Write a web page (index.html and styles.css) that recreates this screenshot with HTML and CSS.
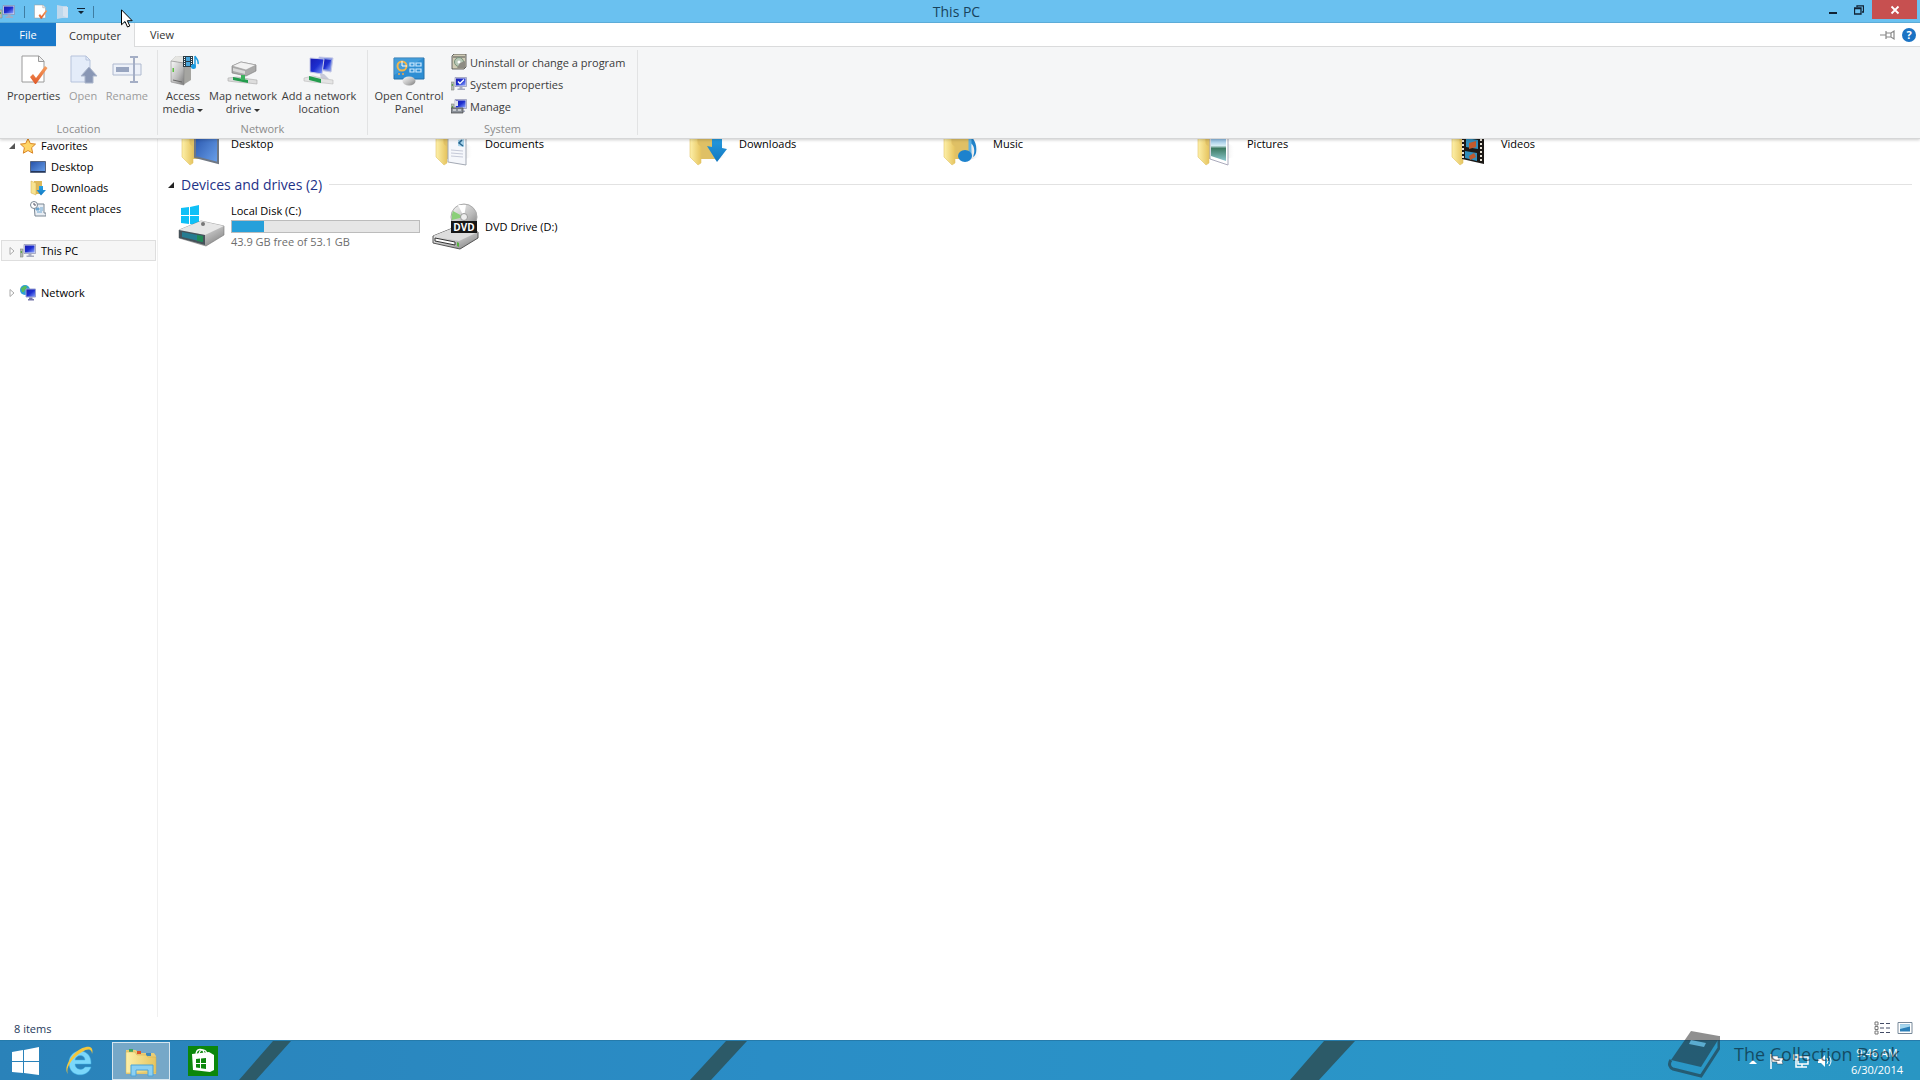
FILE: index.html
```html
<!DOCTYPE html>
<html lang="en">
<head>
    <meta charset="UTF-8">
    <meta name="viewport" content="width=device-width, initial-scale=1.0">
    <title>This PC</title>
    <link rel="stylesheet" href="styles.css">
</head>
<body>
    <!-- Shared gradients and icons -->
    <svg class="defs" aria-hidden="true">
        <defs>
            <linearGradient id="gold" x1="0" x2="1"><stop offset="0" stop-color="#fdf0a9"/><stop offset="1" stop-color="#e6c45e"/></linearGradient>
            <linearGradient id="steel" x1="0" y1="0" x2="1" y2="1"><stop offset="0" stop-color="#fafafa"/><stop offset=".6" stop-color="#b9b9b9"/><stop offset="1" stop-color="#777"/></linearGradient>
            <linearGradient id="screen" x1="0" y1="0" x2="1" y2="1"><stop offset="0" stop-color="#1a1ab0"/><stop offset=".5" stop-color="#1d2fd0"/><stop offset="1" stop-color="#8fa8ff"/></linearGradient>
            <linearGradient id="blue" x1="0" y1="0" x2="1" y2="1"><stop offset="0" stop-color="#2450a8"/><stop offset="1" stop-color="#6ba2ec"/></linearGradient>
            <linearGradient id="arrow" x1="0" y1="0" x2="0" y2="1"><stop offset="0" stop-color="#2ba3e6"/><stop offset="1" stop-color="#1277c0"/></linearGradient>
            <linearGradient id="shade"><stop offset="0" stop-color="#bbb"/><stop offset="1" stop-color="#fff" stop-opacity="0"/></linearGradient>
            <linearGradient id="photo" x1="0" y1="0" x2="0" y2="1"><stop offset="0" stop-color="#4b8fd0"/><stop offset=".45" stop-color="#d5ecf5"/><stop offset=".55" stop-color="#3d7a62"/><stop offset="1" stop-color="#8cc8cf"/></linearGradient>
            <linearGradient id="orange" x1="0" y1="0" x2="0" y2="1"><stop offset="0" stop-color="#f6a05f"/><stop offset="1" stop-color="#e0592a"/></linearGradient>
        </defs>
        <symbol id="pc" viewBox="0 0 16 16">
            <path d="M0 6h3v8H0z" fill="#b4b9b4" stroke="#858c85" stroke-width=".6"/><path d="M.8 8h1.200v2H.8z" fill="#5fa84a"/>
            <path d="M4 1.500h11.500v9H4z" fill="#d5d9ea" stroke="#7d83a8" stroke-width=".6"/><path d="M5 2.500h9.500v7H5z" fill="url(#screen)"/>
            <path d="M8.500 10.500h3v2h2.500v1.500H6.500v-1.500h2z" fill="#a6abc0"/>
        </symbol>
        <symbol id="sheet" viewBox="0 0 28 32">
            <path d="M1 2h17l5 5v21H1z" fill="#fff" stroke="#9a9a9a"/><path d="M17.500 2v5.500H23" fill="#eee" stroke="#9a9a9a"/>
            <path d="M9 23l3-3 3 4 9-12 2.500 2L15 30h-1z" fill="url(#orange)"/>
        </symbol>
        <symbol id="folder" viewBox="0 0 48 48">
            <path d="M30 41l11-3 1-10-8-4z" fill="url(#shade)" opacity=".6"/>
            <path d="M9 6h21v34H14z" fill="#dfc065"/><path d="M5 8l7 3 1 14 3 3v16l-3 2-8-8z" fill="url(#gold)" stroke="#e3c568" stroke-width=".6"/>
        </symbol>
    </svg>

    <header class="window-top">
        <div class="titlebar">
            <div class="quick">
                <svg class="i16" viewBox="1 0 16 16"><use href="#pc" width="16" height="16"/></svg>
                <span class="bar"></span>
                <button type="button" aria-label="Properties"><svg class="i16"><use href="#sheet"/></svg></button>
                <button type="button" aria-label="New folder"><svg class="i16" viewBox="0 0 16 16"><path d="M2 1l5 1v12l-5 1zM7 2h5v12H7z" fill="#bfd8ec"/><path d="M8 3h5v11l-5-2z" fill="#d6e3f0"/></svg></button>
                <button type="button" class="caret" aria-label="Customize toolbar"><svg viewBox="0 0 8 7"><path d="M0 0h8v1H0zM1 3h6L4 6z" fill="#123"/></svg></button>
                <span class="bar"></span>
            </div>
            <h1>This PC</h1>
            <div class="window-buttons">
                <button type="button" aria-label="Minimize"><svg viewBox="0 0 10 10"><path d="M1 7h8v2H1z" fill="#123"/></svg></button>
                <button type="button" aria-label="Restore"><svg viewBox="0 0 10 10"><path d="M.5 3h6.500v6H.500zM0 3.500h7M3 2V.8h6.500V7H8" fill="none" stroke="#123" stroke-width="1.300"/></svg></button>
                <button type="button" class="close" aria-label="Close"><svg viewBox="0 0 10 10"><path d="M1.500 1.500l7 7m0-7l-7 7" stroke="#fff" stroke-width="1.800"/></svg></button>
            </div>
        </div>

        <nav class="tabs">
            <button type="button" class="file">File</button>
            <button type="button" class="active">Computer</button>
            <button type="button">View</button>
            <div class="tabs-right">
                <svg class="i16" viewBox="0 0 16 16"><path d="M0 8h6M6 4v8M6 6h5l3-2v8l-3-2H6M11 6v4" fill="none" stroke="#888" stroke-width="1.200"/></svg>
                <button type="button" class="help" aria-label="Help">?</button>
            </div>
        </nav>

        <div class="ribbon">
            <section class="group location">
                <div class="tools">
                    <button type="button" class="tool"><svg class="i32" viewBox="-3 0 32 32"><use href="#sheet" width="28" height="32"/></svg>Properties</button>
                    <button type="button" class="tool" disabled><svg class="i32" viewBox="0 0 32 32"><path d="M4 2h15l4 4v22H4z" fill="#e4ecf9" stroke="#b6c3dc"/><path d="M19 2v4h4" fill="none" stroke="#b6c3dc"/><path d="M22 13l8 9h-4v7h-8v-7h-4z" fill="#8997b5" stroke="#aab5cb"/></svg>Open</button>
                    <button type="button" class="tool" disabled><svg class="i32" viewBox="0 0 32 32"><path d="M2 10h28v11H2z" fill="#edf1f9" stroke="#aeb9cf"/><path d="M5 13h13v5H5z" fill="#98a5c0"/><path d="M19 3h8M19 28h8M23 4v23" stroke="#a4aec5" stroke-width="2" fill="none"/></svg>Rename</button>
                </div>
                <h2>Location</h2>
            </section>
            <section class="group network">
                <div class="tools">
                    <button type="button" class="tool w44"><svg class="i32" viewBox="0 0 32 32"><path d="M4 7l5-5 15 1v23l-8 5z" fill="#a5a5a1"/><path d="M4 7l5-5 15 1-7 6z" fill="#e6e6e3"/><path d="M4 7l13 2v22L4 28z" fill="url(#steel)" stroke="#888" stroke-width=".6"/><path d="M6 26l9 2" stroke="#666"/><path d="M5.500 14H7v4H5.500z" fill="#5cc040"/><path d="M16 2h10v11H16z" fill="#293c46"/><path d="M19 3h4v4h-4zM19 8h4v4h-4z" fill="#49a5da"/><path d="M17.500 3v10M24.500 3v10" stroke="#fff" stroke-dasharray="1 1"/><path d="M28 2v10M28 2c1 3 4 3 3 8" fill="none" stroke="#1b9be0" stroke-width="1.500"/><circle cx="26.500" cy="12.500" r="2.500" fill="#1b9be0"/></svg>Access<br>media <i></i></button>
                    <button type="button" class="tool w76"><svg class="i32" viewBox="0 0 32 32"><path d="M5 12l9-4 15 3v6l-10 5L5 19z" fill="#aaa" stroke="#777" stroke-width=".6"/><path d="M5 12l9-4 15 3-10 5z" fill="#f2f2f2" stroke="#999" stroke-width=".6"/><path d="M6 14l12 3v3L6 17z" fill="#d9d9d9"/><path d="M1 24l9-1 12 2 8 1v4l-9-1-12-1-8-1z" fill="#ddd" stroke="#aaa" stroke-width=".6"/><path d="M6 23l15 3v3L6 26z" fill="#239c4d"/><path d="M14 21h4v5h-4z" fill="#3bb25d"/></svg>Map network<br>drive <i></i></button>
                    <button type="button" class="tool w76"><svg class="i32" viewBox="0 0 32 32"><path d="M16 3l14 1-2 14-12-2z" fill="#8294df" stroke="#c5c9e8"/><path d="M20 5l8 1-1 10-7-1z" fill="url(#screen)"/><path d="M7 4l14 1-2 15-12-2z" fill="url(#screen)" stroke="#c5c9e8"/><path d="M17 20h4l5 5h-8z" fill="#c8cad8"/><path d="M1 24l9-2 12 3 8 1v4l-9-1-12-1-8-1z" fill="#e4e4e4" stroke="#bbb" stroke-width=".6"/><path d="M6 22l12 3v4L6 26z" fill="#239c4d"/></svg>Add a network<br>location</button>
                </div>
                <h2>Network</h2>
            </section>
            <section class="group system">
                <div class="tools">
                    <button type="button" class="tool w76"><svg class="i32" viewBox="0 0 32 32"><path d="M1 4h30v21H1z" fill="#2e8ed3" stroke="#2470aa"/><path d="M1 4h30L1 21z" fill="#62b4e8" opacity=".4"/><circle cx="9" cy="12" r="4.500" fill="none" stroke="#f3b64a" stroke-width="2"/><path d="M9 7v5h5" stroke="#fff" fill="none"/><path d="M17 9h4v3h-4zM23 9h5v3h-5zM17 15h4v3h-4zM23 15h5v3h-5z" stroke="#cdeaff" stroke-width="1.200" fill="none"/><circle cx="6" cy="20" r="1" fill="#f3a64a"/><circle cx="10" cy="20" r="1" fill="#f3a64a"/><path d="M14 23h5l1 4h-7z" fill="#aaa"/><ellipse cx="16" cy="27" rx="6.500" ry="4.500" fill="url(#steel)"/></svg>Open Control<br>Panel</button>
                    <div class="small-tools">
                        <button type="button"><svg class="i16" viewBox="0 0 16 16"><path d="M1 2l2-2h12v13l-2 2H1z" fill="#d0ccb6" stroke="#444" stroke-width=".8"/><path d="M2 3h12" stroke="#555"/><circle cx="8" cy="8" r="4.500" fill="#b8c8b8" stroke="#77907a"/><circle cx="8" cy="8" r="1.500" fill="#fff"/><path d="M9 9l5-2v7H6z" fill="#8d8b83"/></svg>Uninstall or change a program</button>
                        <button type="button"><svg class="i16" viewBox="0 0 16 16"><use href="#pc"/><path d="M7 5.500l2 2 4-4" fill="none" stroke="#fff" stroke-width="1.400"/></svg>System properties</button>
                        <button type="button"><svg class="i16" viewBox="0 0 16 16"><use href="#pc"/><path d="M0 10h12v5H0z" fill="#8b9199" stroke="#444" stroke-width=".7"/><path d="M4 3h3v5H4z" fill="#dce1ea"/><path d="M2 12h3m2 0h3" stroke="#fff"/></svg>Manage</button>
                    </div>
                </div>
                <h2>System</h2>
            </section>
        </div>
    </header>

    <main class="explorer">
        <aside class="tree">
            <ul>
                <li><a href="#"><svg class="twist" viewBox="0 0 6 6"><path d="M6 0v6H0z" fill="#555"/></svg><svg class="i16" viewBox="0 0 16 16"><path d="M8 .5l2.300 5 5.200.6-3.900 3.600 1.100 5.500L8 12.500l-4.700 2.700 1.100-5.500L.5 6.100l5.200-.6z" fill="#ffd567" stroke="#d98524"/></svg>Favorites</a></li>
                <li class="child"><a href="#"><svg class="i16" viewBox="0 0 16 16"><path d="M.5 2.500h15v11H.5z" fill="url(#blue)" stroke="#566580"/><path d="M1 12.500h14" stroke="#24365c"/></svg>Desktop</a></li>
                <li class="child"><a href="#"><svg class="i16" viewBox="0 0 16 16"><path d="M4 1h8v13H4z" fill="#ddb95b"/><path d="M1 1l5 2v12l-5-2z" fill="#f8e391" stroke="#d4ad4c" stroke-width=".5"/><path d="M9 6h4v4h3l-5 5.500L6.500 10H9z" fill="url(#arrow)"/></svg>Downloads</a></li>
                <li class="child"><a href="#"><svg class="i16" viewBox="0 0 16 16"><path d="M4 3h10v9h2v3H5z" fill="#e8edf3" stroke="#7b8793"/><path d="M6 7h3v2H6zM10 7h3M10 9h3M7 11h5" fill="#6ca5d0" stroke="#6ca5d0"/><circle cx="4" cy="4" r="3.500" fill="#fff" stroke="#7b8793"/><path d="M4 2v2h2" fill="none" stroke="#556"/></svg>Recent places</a></li>
            </ul>
            <ul>
                <li class="current"><a href="#"><svg class="twist" viewBox="0 0 6 8"><path d="M1 .5L5 4 1 7.500z" fill="#fff" stroke="#aaa"/></svg><svg class="i16"><use href="#pc"/></svg>This PC</a></li>
            </ul>
            <ul>
                <li><a href="#"><svg class="twist" viewBox="0 0 6 8"><path d="M1 .5L5 4 1 7.500z" fill="#fff" stroke="#aaa"/></svg><svg class="i16" viewBox="0 0 16 16"><circle cx="5" cy="5" r="5" fill="#2d9ed8"/><path d="M1 3c2 0 3-3 5-2s0 3-1 4-1 3-3 2z" fill="#57bb5c"/><path d="M6 4h9.500v8H6z" fill="url(#screen)" stroke="#9aa2ce"/><path d="M9 12.500h3.500V14H14v1.500H8V14h1z" fill="#77a"/></svg>Network</a></li>
            </ul>
        </aside>

        <section class="files">
            <div class="tiles folders">
                <a href="#" class="tile"><svg class="i48"><use href="#folder"/><path d="M18 12l23 4v28l-23-6z" fill="url(#blue)" stroke="#6f7783" stroke-width="2"/></svg><span>Desktop</span></a>
                <a href="#" class="tile"><svg class="i48"><use href="#folder"/><path d="M17 12l18 4v30l-18-3z" fill="#f5f7fb" stroke="#a3a9b4"/><path d="M27 21l6-1v8l-6-1z" fill="#a9d3ea"/><path d="M31 21l-3 3 4 3" stroke="#27658f" stroke-width="1.500" fill="none"/><path d="M20 31l12 1M20 34l12 1M20 37l12 1" stroke="#c6cad8"/></svg><span>Documents</span></a>
                <a href="#" class="tile"><svg class="i48"><use href="#folder"/><path d="M27 14l10 1v14l5 1-10 13-10-16 5 1z" fill="url(#arrow)"/></svg><span>Downloads</span></a>
                <a href="#" class="tile"><svg class="i48"><use href="#folder"/><path d="M31 12c1 8 8 10 6 22-1 3-3 4-3 4 3-8 0-13-3-14" fill="#2183ca"/><path d="M31 12v25" stroke="#5cb1e5" stroke-width="3"/><ellipse cx="26" cy="37" rx="7" ry="6" fill="#1d82cd"/></svg><span>Music</span></a>
                <a href="#" class="tile"><svg class="i48"><use href="#folder"/><path d="M17 12l18 4v30l-18-6z" fill="#fff" stroke="#aab"/><path d="M18 14l15 4v24l-15-5z" fill="url(#photo)"/></svg><span>Pictures</span></a>
                <a href="#" class="tile"><svg class="i48"><use href="#folder"/><path d="M15 12l22 3v30l-22-5z" fill="#1c1916"/><path d="M19 19l12 2v9l-12-2zM18 32l12 2v8l-12-3z" fill="#328ebb"/><path d="M22 24l7-2v6l-7 2zM22 37l5-3 2 4-6 3z" fill="#c05b2e"/><path d="M34 16v27M16 13v26" stroke="#e8e2d6" stroke-width="2" stroke-dasharray="2 2"/></svg><span>Videos</span></a>
            </div>

            <h2 class="heading"><svg class="twist" viewBox="0 0 6 6"><path d="M6 0v6H0z" fill="#222"/></svg>Devices and drives (2)</h2>

            <div class="tiles">
                <a href="#" class="tile">
                    <svg class="i48" viewBox="0 0 48 48"><path d="M4 6l8-1v8H4zM13 5l9-2v10h-9zM4 14h8v8l-8-1zM13 14h9v10l-9-2z" fill="#0fc0f7"/><path d="M2 28l22-9 23 5v9L29 44 2 36z" fill="url(#steel)" stroke="#777" stroke-width=".6"/><path d="M2 28l22-9 23 5-19 9z" fill="#e7e7e7"/><path d="M2 28l26 5v10L2 36z" fill="#46525a"/><path d="M5 30l21 4v6L5 35z" fill="#267b91"/><path d="M20 33l6 1v6l-6-1z" fill="#218a56"/><circle cx="26" cy="22" r="2" fill="#777"/></svg>
                    <span class="drive">Local Disk (C:)<span class="usage"><span style="width: 17.3%"></span></span><small>43.9 GB free of 53.1 GB</small></span>
                </a>
                <a href="#" class="tile">
                    <svg class="i48" viewBox="0 0 48 48"><circle cx="33" cy="15" r="13" fill="url(#steel)" stroke="#aaa"/><path d="M33 15L22 9a13 13 0 0 0-1 9z" fill="#8bcf79"/><path d="M33 15L27 3h8z" fill="#fff"/><circle cx="33" cy="15" r="3.500" fill="#eee" stroke="#999"/><path d="M2 34l20-8 25 4v6L29 47 2 41z" fill="url(#steel)" stroke="#555"/><path d="M2 34l20-8 25 4-19 9z" fill="#ddd"/><path d="M4 36l20 4v3L4 39z" fill="#fff" stroke="#333"/><path d="M26 40l2 1v4l-2-1z" fill="#55b33f"/><path d="M20 19h26v12H20z" fill="#171717"/><text x="33" y="29" text-anchor="middle" class="dvd">DVD</text></svg>
                    <span>DVD Drive (D:)</span>
                </a>
            </div>
        </section>
    </main>

    <footer class="status">
        <span>8 items</span>
        <div class="views">
            <button type="button" aria-label="Details view"><svg class="i16" viewBox="0 0 16 16"><path d="M1 1h3v3H1zM1 5.500h3v3H1zM1 10h3v3H1z" fill="#fff" stroke="#777"/><path d="M6 2.500h4m2 0h4M6 7h4m2 0h4M6 11.500h4m2 0h4" stroke="#444c66"/></svg></button>
            <button type="button" aria-label="Large icons view"><svg class="i16" viewBox="0 0 16 16"><path d="M1 1.500h14v11H1z" fill="#fff" stroke="#789"/><path d="M3 3.500h10v7H3z" fill="#2a7fb8"/><path d="M3 3.500h10v2L3 8z" fill="#a5d6ee"/></svg></button>
        </div>
    </footer>

    <nav class="taskbar">
        <svg class="wallpaper" viewBox="0 0 1920 40" preserveAspectRatio="none"><path d="M273 0h18l-35 40h-17zM726 0h21l-36 40h-21zM1324 0h31l-36 40h-29z" fill="#2c5a68"/></svg>
        <button type="button" class="start" aria-label="Start"><svg class="i32" viewBox="0 0 32 32"><path d="M3 7l11-2v11H3zM15 5l15-3v14H15zM3 17h11v11L3 27zM15 17h15v13l-15-2z" fill="#fff"/></svg></button>
        <button type="button" aria-label="Internet Explorer"><svg class="i32" viewBox="0 0 32 32"><path d="M28 19H12c0 6 8 7 10 3h6c-3 11-22 11-22-4C6 2 29 2 28 19zM12 15h10c0-6-9-6-10 0z" fill="#7bd7fa" stroke="#42b3e6" stroke-width=".5"/><path d="M5 29c-6-6 6-25 18-27 7-1 7 4 6 7 0-5-4-6-10-2C9 12 2 24 5 29z" fill="#f4c73c"/></svg></button>
        <button type="button" class="running" aria-label="File Explorer"><svg class="i32" viewBox="0 0 32 32"><path d="M1 5h10l2 3h16l2 3v18H1z" fill="#e9cd76"/><path d="M4 4h4v3H4z" fill="#3aa660"/><path d="M12 6h4v3h-4z" fill="#d9542c"/><path d="M21 8h5v3h-5z" fill="#3d89bd"/><path d="M1 7h9l2 3h9l2 2h8v16H1z" fill="url(#gold)" stroke="#d1ad51" stroke-width=".5"/><path d="M6 20h22v11h-5v-6H11v6H6z" fill="#8bd0f3" stroke="#4ba3d8"/></svg></button>
        <button type="button" aria-label="Store"><svg class="i32" viewBox="0 0 32 32"><path d="M1 1h30v30H1z" fill="#0c870c"/><path d="M5 9l17-2 5 3v15l-4 2-17-2z" fill="#fff"/><path d="M9 10c0-7 7-7 8-2M12 9c1-6 7-5 8 0" fill="none" stroke="#fff" stroke-width="1.300"/><path d="M9 14l4-.5V18H9zM14 13.500l5-.5v5h-5zM9 19h4v4l-4-.5zM14 19h5v5l-5-.8z" fill="#0c870c"/></svg></button>
        <div class="tray">
            <button type="button" aria-label="Show hidden icons"><svg class="i16" viewBox="0 0 16 16"><path d="M4 11l4-4 4 4z" fill="#fff"/></svg></button>
            <svg class="i16" viewBox="0 0 16 16"><path d="M2 1v15" stroke="#fff" stroke-width="1.500"/><path d="M3 3h6v2h6l-2 3 1 3H8V9H3z" fill="#fff" stroke="#345" stroke-width=".5"/></svg>
            <svg class="i16" viewBox="0 0 16 16"><path d="M5 4h10v7H5zM9 11v3m-3 0h8M1 2h4v4H1zM3 6v8h3" fill="none" stroke="#fff" stroke-width="1.500"/></svg>
            <svg class="i16" viewBox="0 0 16 16"><path d="M1 6h3l4-4v12l-4-4H1z" fill="#fff"/><path d="M10 5q2 3 0 6M12 3q4 5 0 10" fill="none" stroke="#fff"/></svg>
            <time>9:46 AM<br>6/30/2014</time>
        </div>
    </nav>

    <div class="watermark">
        <svg viewBox="0 0 52 48"><path d="M23 1l28 5-1 4L33 37 3 30z" fill="#222"/><path d="M3 30c-3 4-1 8 2 9l28 7 18-28V6" fill="none" stroke="#222" stroke-width="3"/><path d="M23 10l15 3-2 4-15-3z" fill="#8cc2da"/></svg>
        <span>The Collection Book</span>
    </div>
    <svg class="cursor" viewBox="0 0 12 19"><path d="M.5.8v15l3.500-3.300 2.500 5.500 2.300-1-2.400-5.300h4.800z" fill="#fff" stroke="#000"/></svg>
</body>
</html>
```
FILE: styles.css
```css
* {
    box-sizing: border-box;
}
body {
    display: flex;
    flex-direction: column;
    height: 100vh;
    margin: 0;
    overflow: hidden;
    background-color: #fff;
    color: #000;
    font-family: "Open Sans", "Noto Sans", sans-serif;
    font-size: 11px;
    line-height: 13px;
}
button {
    padding: 0;
    border: 0;
    background: none;
    color: inherit;
    font: inherit;
}
a {
    color: inherit;
    text-decoration: none;
}
h1, h2, ul {
    margin: 0;
    padding: 0;
    font-size: 11px;
    font-weight: 400;
}
svg {
    display: block;
    flex: none;
}
.defs {
    position: absolute;
    width: 0;
    height: 0;
}
.i16 {
    width: 16px;
    height: 16px;
}
.i32 {
    width: 32px;
    height: 32px;
}
.i48 {
    width: 48px;
    height: 48px;
}

/* Title bar */
.window-top {
    position: relative;
    z-index: 1;
    box-shadow: 0 1px 3px rgba(0, 0, 0, 0.2);
}
.titlebar {
    display: grid;
    grid-template-columns: 1fr auto 1fr;
    height: 23px;
    background-color: #6ac1f0;
    border-bottom: 1px solid #5cacd8;
}
.titlebar h1 {
    padding-right: 7px;
    font-size: 14px;
    line-height: 23px;
    color: #18435c;
}
.quick {
    display: flex;
    align-items: center;
    gap: 6px;
}
.quick .bar {
    width: 1px;
    height: 12px;
    margin: 0 2px;
    background-color: #3f7da2;
}
.quick .caret svg {
    width: 8px;
    height: 7px;
}
.window-buttons {
    display: flex;
    justify-content: flex-end;
    align-items: flex-start;
    padding-right: 3px;
}
.window-buttons button {
    display: flex;
    justify-content: center;
    align-items: center;
    width: 26px;
    height: 19px;
}
.window-buttons .close {
    width: 45px;
    background-color: #c75050;
}
.window-buttons svg {
    width: 10px;
    height: 10px;
}

/* Ribbon */
.tabs {
    display: flex;
    height: 24px;
    border-bottom: 1px solid #dadbdc;
    background-color: #fff;
    color: #333;
}
.tabs > button {
    width: 54px;
}
.tabs .file {
    width: 56px;
    background-color: #1979ca;
    color: #fff;
}
.tabs .active {
    width: 79px;
    margin-bottom: -1px;
    border-right: 1px solid #dadbdc;
    background-color: #f5f6f7;
}
.tabs-right {
    display: flex;
    align-items: center;
    gap: 6px;
    margin-left: auto;
    padding-right: 4px;
}
.help {
    width: 14px;
    height: 14px;
    border-radius: 50%;
    background-color: #1b73c4;
    color: #fff;
    font-weight: 700;
}
.ribbon {
    display: flex;
    height: 92px;
    padding: 3px 0;
    border-bottom: 1px solid #d5d6d7;
    background-color: #f5f6f7;
    color: #3b3b3b;
}
.group {
    display: flex;
    flex-direction: column;
    justify-content: space-between;
    border-right: 1px solid #e2e3e4;
}
.group h2 {
    color: #8c8c8c;
    text-align: center;
}
.location {
    width: 158px;
}
.network {
    width: 210px;
}
.system {
    width: 270px;
}
.tools {
    display: flex;
    align-items: flex-start;
    padding: 4px 3px 0;
}
.location .tools {
    justify-content: space-between;
    padding: 4px 9px 0 7px;
}
.tool {
    text-align: center;
    white-space: nowrap;
}
.tool svg {
    margin: 0 auto 3px;
}
.tool:disabled {
    color: #9b9b9b;
}
.w44 {
    width: 44px;
}
.w76 {
    width: 76px;
}
.tool i {
    display: inline-block;
    border: 3px solid transparent;
    border-top-color: #333;
    border-bottom: 0;
    vertical-align: middle;
}
.small-tools {
    display: flex;
    flex-direction: column;
    gap: 6px;
    padding-left: 4px;
}
.small-tools button {
    display: flex;
    align-items: center;
    gap: 3px;
    white-space: nowrap;
}

/* Folder tree and file list */
.explorer {
    display: flex;
    flex: 1;
    min-height: 0;
    overflow: hidden;
}
.tree {
    width: 158px;
    margin-top: -4px;
    border-right: 1px solid #f0f0f0;
}
.tree ul {
    margin-bottom: 21px;
    list-style: none;
}
.tree a {
    display: flex;
    align-items: center;
    gap: 5px;
    height: 21px;
    padding-left: 9px;
}
.tree .child a {
    padding-left: 30px;
}
.tree .current {
    margin: 0 1px;
    border: 1px solid #dedede;
    background-color: #f6f6f6;
}
.tree .current a {
    height: 19px;
    padding-left: 7px;
}
.twist {
    width: 6px;
    height: 8px;
}
.files {
    flex: 1;
    margin-top: -21px;
    padding: 0 8px 0 10px;
}
.tiles {
    display: grid;
    grid-template-columns: repeat(auto-fill, 254px);
    padding-left: 9px;
}
.tile {
    display: flex;
    align-items: center;
    gap: 6px;
    height: 50px;
}
.heading {
    display: flex;
    align-items: center;
    gap: 7px;
    height: 33px;
    color: #1e3287;
    font-size: 14px;
}
.heading::after {
    content: "";
    flex: 1;
    border-top: 1px solid #e2e2e2;
}
.drive {
    width: 189px;
}
.usage {
    display: block;
    height: 13px;
    margin: 3px 0 2px;
    border: 1px solid #bcbcbc;
    background-color: #e6e6e6;
}
.usage span {
    display: block;
    height: 100%;
    background-color: #26a0da;
}
.drive small {
    display: block;
    color: #6d6d6d;
    font-size: 11px;
}
.dvd {
    fill: #fff;
    font-size: 10px;
    font-weight: 700;
}
.status {
    display: flex;
    justify-content: space-between;
    align-items: center;
    height: 23px;
    padding: 0 7px 0 14px;
    color: #1e395b;
}
.views {
    display: flex;
    gap: 7px;
}

/* Taskbar */
.taskbar {
    position: relative;
    display: flex;
    align-items: center;
    height: 40px;
    border-top: 1px solid #257bab;
    background: linear-gradient(90deg, #2a82b9, #2a8dc6 40%, #2a97c8 80%, #2996c3);
}
.wallpaper {
    position: absolute;
    width: 100%;
    height: 100%;
}
.taskbar button {
    position: relative;
}
.taskbar > button {
    display: flex;
    justify-content: center;
    align-items: center;
    width: 58px;
    height: 38px;
}
.taskbar > .start {
    width: 50px;
}
.taskbar > .running {
    margin: 0 4px;
    border: 1px solid #d5e6f0;
    background-color: #76a8c8;
}
.tray {
    position: relative;
    display: flex;
    align-items: center;
    gap: 8px;
    margin-left: auto;
    padding-right: 17px;
    color: #fff;
}
.tray time {
    padding-left: 10px;
    line-height: 17px;
    text-align: center;
}
.watermark {
    position: absolute;
    right: 20px;
    bottom: 2px;
    z-index: 2;
    display: flex;
    align-items: center;
    gap: 14px;
    color: #000;
    font-size: 18px;
    opacity: 0.5;
    pointer-events: none;
}
.watermark svg {
    width: 52px;
    height: 48px;
}
.cursor {
    position: absolute;
    top: 9px;
    left: 121px;
    z-index: 2;
    width: 12px;
    height: 19px;
}
```
